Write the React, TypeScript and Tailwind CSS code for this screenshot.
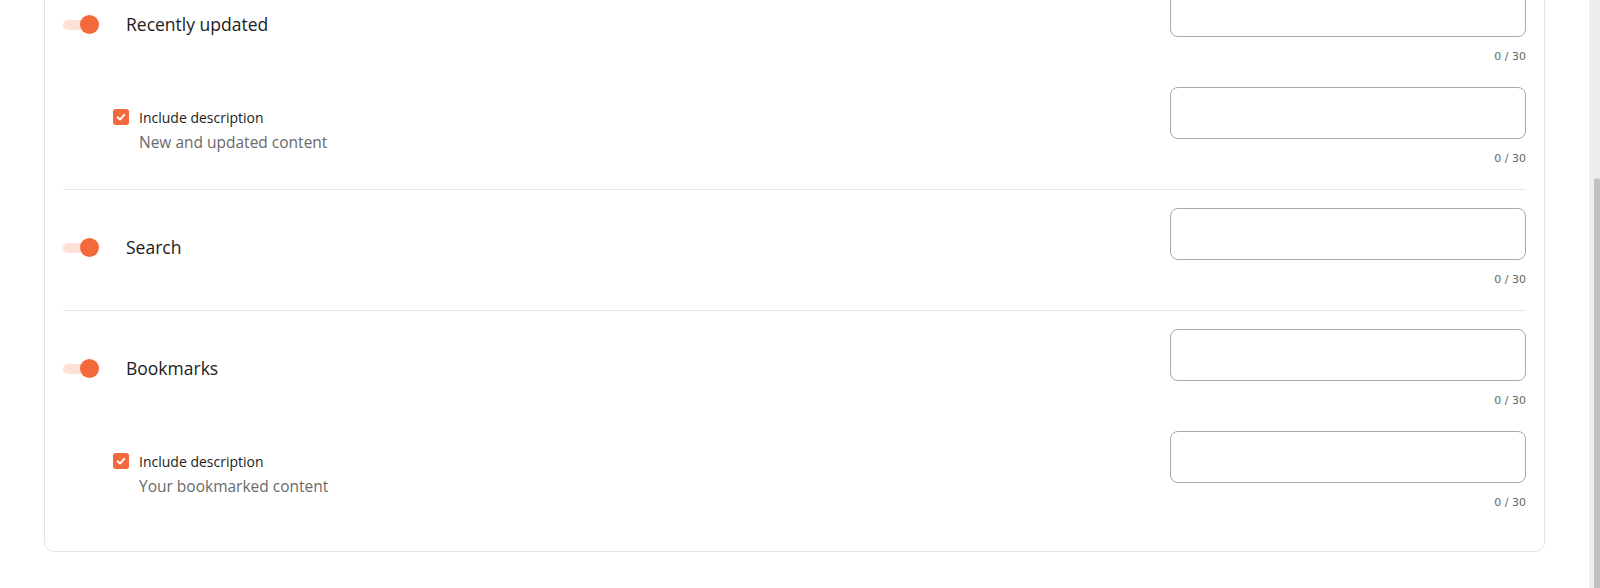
import React from "react";

function Toggle() {
  return (
    <div className="relative w-[36px] h-[20px] shrink-0">
      <div className="absolute left-0 top-[5px] w-[34px] h-[10px] rounded-full bg-[#fde0d6]" />
      <div className="absolute right-0 top-0 w-[19px] h-[19px] rounded-full bg-[#f4693c]" />
    </div>
  );
}

function Check() {
  return (
    <div className="w-[16px] h-[16px] rounded-[3px] bg-[#f4693c] flex items-center justify-center shrink-0 mt-[1px]">
      <svg width="12" height="12" viewBox="0 0 12 12" fill="none">
        <path d="M2.6 6.3 L5 8.6 L9.4 3.6" stroke="white" strokeWidth="1.9" strokeLinecap="round" strokeLinejoin="round" />
      </svg>
    </div>
  );
}

function Field() {
  return (
    <div className="w-[356px] shrink-0 flex flex-col">
      <div className="h-[52px] rounded-[8px] border border-[#a9a9a9] bg-white" />
      <div className="mt-[12px] h-[16px] leading-[16px] text-right text-[11px] text-[#666] font-['DejaVu_Sans',sans-serif]">
        0 / 30
      </div>
    </div>
  );
}

function ToggleRow({ label }: { label: string }) {
  return (
    <div className="flex items-center justify-between">
      <div className="flex items-center">
        <Toggle />
        <span className="ml-[27px] text-[17.5px] text-[#1c1c1c] leading-[24px] -mt-[2px]">{label}</span>
      </div>
      <Field />
    </div>
  );
}

function CheckRow({ desc }: { desc: string }) {
  return (
    <div className="flex items-center justify-between">
      <div className="flex items-start pl-[50px] pt-[6px]">
        <Check />
        <div className="ml-[10px] flex flex-col">
          <span className="text-[14px] leading-[20px] text-[#1c1c1c]">Include description</span>
          <span className="mt-[4px] text-[15.5px] leading-[20px] text-[#6a6a6a]">{desc}</span>
        </div>
      </div>
      <Field />
    </div>
  );
}

export default function App() {
  return (
    <div className="w-[1600px] h-[588px] overflow-hidden bg-white flex font-['Open_Sans',sans-serif]">
      <div className="flex-1 min-w-0">
        <div className="ml-[44px] mr-[44px] mt-[-34px] border border-[#e4e4e4] rounded-[10px] px-[18px] pb-[18px]">
          <div className="pt-[18px] pb-[22px] flex flex-col gap-[22px]">
            <ToggleRow label="Recently updated" />
            <CheckRow desc="New and updated content" />
          </div>
          <div className="border-t border-[#e6e6e6] pt-[18px] pb-[22px] flex flex-col gap-[22px]">
            <ToggleRow label="Search" />
          </div>
          <div className="border-t border-[#e6e6e6] pt-[18px] pb-[22px] flex flex-col gap-[22px]">
            <ToggleRow label="Bookmarks" />
            <CheckRow desc="Your bookmarked content" />
          </div>
        </div>
      </div>
      <div className="w-[11px] shrink-0 bg-[#eeeeee] flex justify-end">
        <div className="mt-[178px] w-[6px] h-[420px] rounded-t-[3px] bg-[#c1c1c1]" />
      </div>
    </div>
  );
}
